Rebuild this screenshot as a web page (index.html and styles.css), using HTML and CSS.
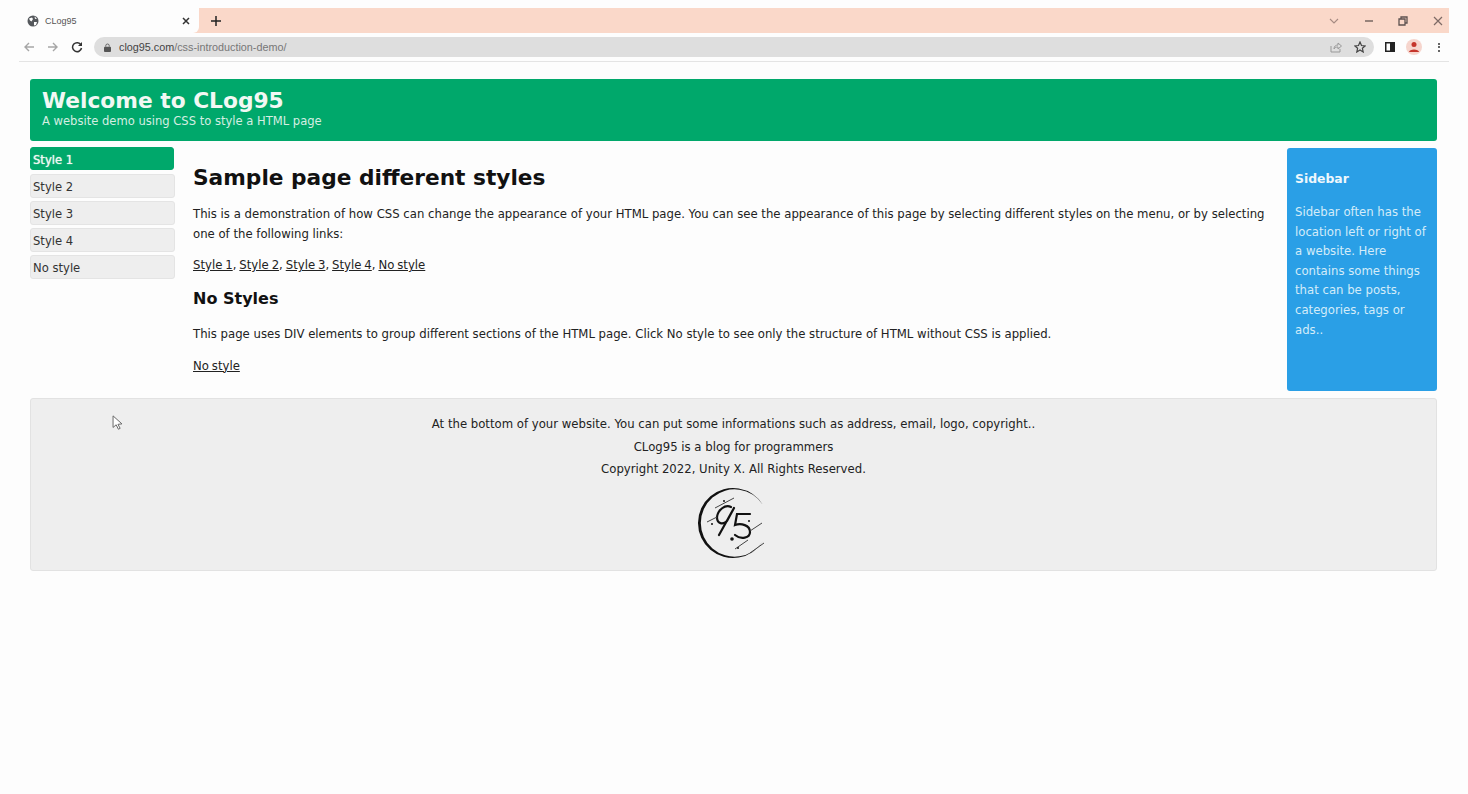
FILE: index.html
```html
<!DOCTYPE html>
<html lang="en">
<head>
<meta charset="utf-8">
<title>CLog95</title>
<link rel="stylesheet" href="styles.css">
</head>
<body>
<div class="browser">
  <div class="tabstrip">
    <div class="tab">
      <svg class="favicon" viewBox="0 0 12 12" width="12" height="12"><circle cx="6" cy="6" r="5.5" fill="#55585c"/><path d="M2 3.5 5 2.5 6 4 4.5 6.5 3 5.5ZM7 7 10 7 9 10 7 10.500Z M7.500 1.500 10 3.500 8 4Z" fill="#fff"/></svg>
      <span class="tab-title">CLog95</span>
      <svg class="tab-close" viewBox="0 0 10 10" width="10" height="10"><path d="M2 2 8 8M8 2 2 8" stroke="#333" stroke-width="1.500"/></svg>
    </div>
    <svg class="new-tab" viewBox="0 0 10 10" width="10" height="10"><path d="M5 0V10M0 5H10" stroke="#222" stroke-width="1.500"/></svg>
    <div class="win-controls">
      <svg viewBox="0 0 10 6" width="10" height="6"><path d="M1 1 5 5 9 1" fill="none" stroke="#a58a82" stroke-width="1.100"/></svg>
      <svg viewBox="0 0 10 10" width="10" height="10"><path d="M1 5H9" stroke="#6d5f5a" stroke-width="1.400"/></svg>
      <svg viewBox="0 0 10 10" width="10" height="10"><path d="M1 3H7V9H1ZM3 3V1H9V7H7" fill="none" stroke="#5d5250" stroke-width="1.300"/></svg>
      <svg viewBox="0 0 10 10" width="10" height="10"><path d="M1 1 9 9M9 1 1 9" stroke="#7d6a65" stroke-width="1.200"/></svg>
    </div>
  </div>
  <div class="toolbar">
    <svg class="nav" viewBox="0 0 12 12" width="12" height="12"><path d="M11 6H2M6 2 2 6 6 10" fill="none" stroke="#a6a6a6" stroke-width="1.400"/></svg>
    <svg class="nav" viewBox="0 0 12 12" width="12" height="12"><path d="M1 6H10M6 2 10 6 6 10" fill="none" stroke="#a6a6a6" stroke-width="1.400"/></svg>
    <svg class="nav" viewBox="0 0 12 12" width="12" height="12"><path d="M10 4A4.500 4.500 0 1 0 10.500 7" fill="none" stroke="#333" stroke-width="1.500"/><path d="M11 1V5H7Z" fill="#333"/></svg>
    <div class="omnibox">
      <svg class="lock" viewBox="0 0 8 10" width="7" height="9"><path d="M2 4V3A2 2 0 0 1 6 3V4" fill="none" stroke="#555" stroke-width="1"/><rect y="4" width="8" height="6" rx="1" fill="#555"/></svg>
      <span class="url"><span class="url-host">clog95.com</span>/css-introduction-demo/</span>
      <svg class="omni-icon" viewBox="0 0 12 12" width="12" height="12"><path d="M1 5V11H10V8" fill="none" stroke="#999" stroke-width="1"/><path d="M4 8C4 5 6 4 8 4V2L11.500 5 8 8V6C6 6 5 6.500 4 8Z" fill="none" stroke="#999" stroke-width="1"/></svg>
      <svg class="omni-icon" viewBox="0 0 12 12" width="12" height="12"><path d="M6 1 7.500 4.500 11 5 8.400 7.300 9.200 11 6 9 2.800 11 3.600 7.300 1 5 4.500 4.500Z" fill="none" stroke="#444" stroke-width="1.200"/></svg>
    </div>
    <svg class="panel" viewBox="0 0 10 10" width="10" height="10"><rect x=".75" y=".75" width="8.500" height="8.500" fill="#fff" stroke="#222" stroke-width="1.500"/><rect x="5" y="1" width="4" height="8" fill="#222"/></svg>
    <div class="avatar"><svg viewBox="0 0 12 12" width="12" height="12"><circle cx="6" cy="3.500" r="2.500" fill="#c5352b"/><path d="M1 11C1 7.500 11 7.500 11 11Z" fill="#c5352b"/></svg></div>
    <div class="kebab"><i></i><i></i><i></i></div>
  </div>
</div>

<div class="page">
  <header class="site-header">
    <h1>Welcome to CLog95</h1>
    <p>A website demo using CSS to style a HTML page</p>
  </header>
  <div class="columns">
    <nav class="menu">
      <a class="menu-item active">Style 1</a>
      <a class="menu-item">Style 2</a>
      <a class="menu-item">Style 3</a>
      <a class="menu-item">Style 4</a>
      <a class="menu-item">No style</a>
    </nav>
    <main class="content">
      <h2>Sample page different styles</h2>
      <p>This is a demonstration of how CSS can change the appearance of your HTML page. You can see the appearance of this page by selecting different styles on the menu, or by selecting one of the following links:</p>
      <p class="links"><a>Style 1</a>, <a>Style 2</a>, <a>Style 3</a>, <a>Style 4</a>, <a>No style</a></p>
      <h3>No Styles</h3>
      <p>This page uses DIV elements to group different sections of the HTML page. Click No style to see only the structure of HTML without CSS is applied.</p>
      <p class="links"><a>No style</a></p>
    </main>
    <aside class="sidebar">
      <h4>Sidebar</h4>
      <p>Sidebar often has the location left or right of a website. Here contains some things that can be posts, categories, tags or ads..</p>
    </aside>
  </div>
  <footer class="site-footer">
    <p>At the bottom of your website. You can put some informations such as address, email, logo, copyright..</p>
    <p>CLog95 is a blog for programmers</p>
    <p>Copyright 2022, Unity X. All Rights Reserved.</p>
    <svg class="logo" viewBox="0 0 72 74" width="72" height="74">
      <path d="M66 19A35 35 0 1 0 66 55A33.700 33.700 0 1 1 66 19Z" fill="#111"/>
      <path d="M34 21C28 18 21 24 20 31C20 38 26 39 30 35L37 22L22 49" fill="none" stroke="#111" stroke-width="2.200" stroke-linecap="round" stroke-linejoin="round"/>
      <path d="M53 28H40L38 39C44 37 53 39 53 46 53 52 44 54 38 49" fill="none" stroke="#111" stroke-width="2.200" stroke-linecap="round"/>
      <path d="M10 36 20 31M18 22 37 12M53 45 65 37M38 63 51 54M53 67 67 57" fill="none" stroke="#444" stroke-width="1"/>
      <circle cx="35" cy="53" r="1.800" fill="#111"/><circle cx="15" cy="38" r="1" fill="#111"/><circle cx="27" cy="15" r="1" fill="#111"/><circle cx="52" cy="35" r="1" fill="#111"/><circle cx="41" cy="62" r="1" fill="#111"/>
    </svg>
  </footer>
</div>
<svg class="cursor" viewBox="0 0 12 18" width="11" height="16"><path d="M1 1V14L4.500 11 7 16 9 15 6.500 10.500 11 10Z" fill="#fff" stroke="#666" stroke-width="1.100"/></svg>
</body>
</html>
```

FILE: styles.css
```css
* { box-sizing: border-box; }
html, body { margin: 0; height: 100%; }
body { background: #fdfdfd; font-family: "DejaVu Sans", sans-serif; color: #222; overflow: hidden; position: relative; }
p { margin: 0; }

.browser { margin: 8px 19px 0; height: 54px; border-bottom: 1px solid #e4e4e4; }
.tabstrip { height: 25px; background: #fad8c9; display: flex; align-items: center; }
.tab { width: 180px; height: 25px; background: #fdfdfd; border-radius: 0 0 6px 0; display: flex; align-items: center; padding: 0 8px; }
.favicon { margin-right: 6px; }
.tab-title { font: 9px "Liberation Sans", sans-serif; color: #555; flex: 1; }
.new-tab { margin-left: 12px; }
.win-controls { margin-left: auto; display: flex; align-items: center; gap: 24.700px; padding-right: 6px; }
.toolbar { height: 28px; display: flex; align-items: center; padding: 0 9px 0 4px; }
.nav { margin-right: 12px; }
.omnibox { flex: 1; height: 20px; margin-left: -1px; background: #dedede; border-radius: 10px; display: flex; align-items: center; padding: 0 8px 0 10px; margin-right: 11px; }
.lock { margin-right: 8px; }
.url { font: 10.800px "Liberation Sans", sans-serif; color: #777; flex: 1; }
.url-host { color: #444; }
.omni-icon { margin-left: 12px; }
.panel { margin-right: 11px; }
.avatar { width: 16px; height: 16px; border-radius: 50%; background: #f6d5cd; display: flex; align-items: center; justify-content: center; margin-right: 16px; }
.kebab { display: flex; flex-direction: column; gap: 1.500px; }
.kebab i { width: 2px; height: 2px; background: #333; border-radius: 50%; }

.page { padding: 17px 31px 0 30px; }
.site-header { height: 62px; background: #00a86b; border-radius: 3px; padding: 9px 12px; color: #fff; }
.site-header h1 { margin: 0; font-size: 21.750px; line-height: 26px; font-weight: 700; color: #f2f8f4; }
.site-header p { font-size: 11.550px; line-height: 14px; color: #d5eee2; }

.columns { display: flex; margin-top: 7px; height: 243px; }
.menu { width: 145px; display: flex; flex-direction: column; gap: 3px; margin-top: -1px; }
.menu-item { height: 24px; padding: 0 2px; line-height: 24px; font-size: 11.600px; background: #eee; border: 1px solid #e4e4e4; border-radius: 3px; color: #333; }
.menu-item.active { background: #00a86b; border-color: #00a86b; color: #eef8f2; text-shadow: 0 0 1px #eef8f2; height: 23px; margin-bottom: 1px; width: 144px; }
.content { flex: 1; padding: 0 18px; font-size: 11.700px; line-height: 20px; color: #222; }
.content h2 { margin: 15px 0 12px; font-size: 21.700px; line-height: 29px; font-weight: 700; color: #111; }
.content p { margin-bottom: 11px; }
.content h3 { margin: 13px 0 14px; font-size: 16px; line-height: 22px; font-weight: 700; color: #111; }
.content h3 + p { margin-bottom: 11.500px; }
.links { word-spacing: -0.8px; }
.links a { text-decoration: underline; }
.sidebar { width: 150px; background: #2a9fe6; border-radius: 3px; padding: 21px 7px 20px 8px; color: #d4ecf9; font-size: 11.700px; line-height: 19.600px; }
.sidebar h4 { margin: 0 0 14px; font-size: 12.400px; line-height: 20px; font-weight: 700; color: #eef7fc; }

.site-footer { margin-top: 7px; height: 173px; background: #eee; border: 1px solid #e2e2e2; border-radius: 3px; padding: 14px 0 0; text-align: center; font-size: 11.700px; line-height: 22.500px; color: #222; }
.logo { display: block; margin: 0 auto; position: relative; top: 5px; left: -1px; }
.cursor { position: absolute; left: 112px; top: 415px; }
```
